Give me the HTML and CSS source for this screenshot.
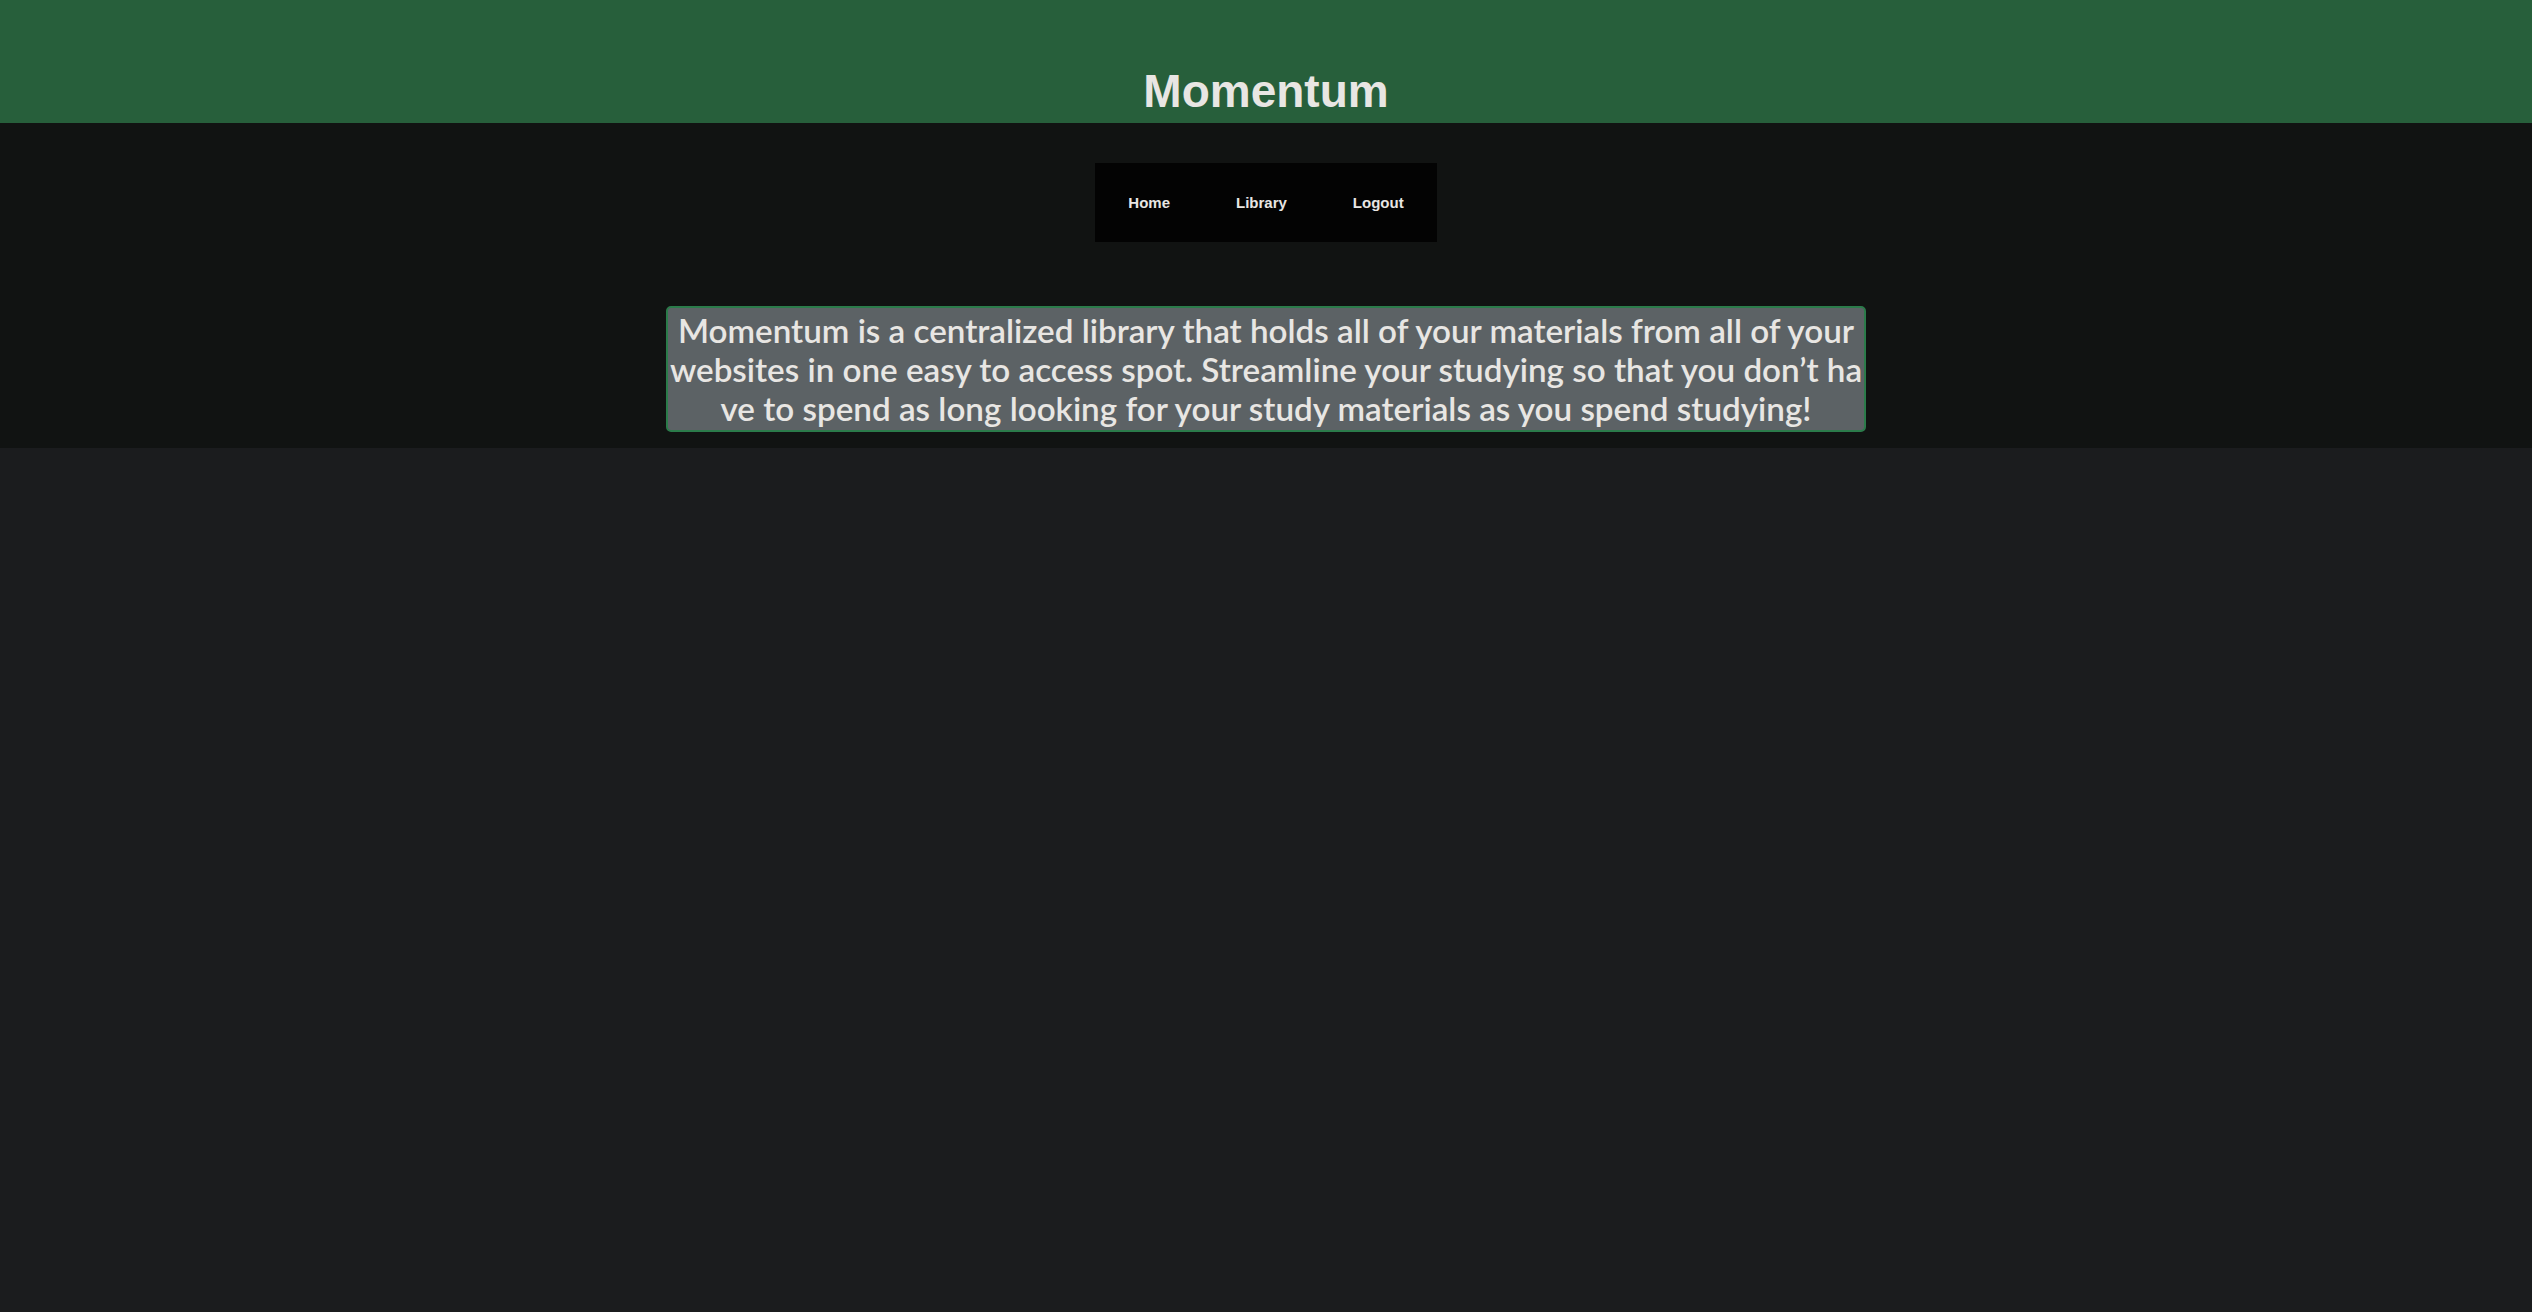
FILE: index.html
```html
<!DOCTYPE html>
<html lang="en">
<head>
<meta charset="utf-8">
<title>Momentum</title>
<link rel="stylesheet" href="styles.css">
</head>
<body>
  <header class="site-header">
    <h1 class="site-title">Momentum</h1>
  </header>
  <section class="hero">
    <nav class="main-nav">
      <a class="nav-link" href="#">Home</a>
      <a class="nav-link" href="#">Library</a>
      <a class="nav-link" href="#">Logout</a>
    </nav>
    <p class="intro">
      <span class="intro-line">Momentum is a centralized library that holds all of your materials from all of your</span>
      <span class="intro-line">websites in one easy to access spot. Streamline your studying so that you don’t ha</span>
      <span class="intro-line">ve to spend as long looking for your study materials as you spend studying!</span>
    </p>
  </section>
</body>
</html>
```
FILE: styles.css
```css
html, body {
  margin: 0;
  padding: 0;
}

body {
  background: #1b1c1e;
  color: #e8e6e3;
  font-family: "Liberation Sans", Arial, sans-serif;
  min-height: 100vh;
}

.site-header {
  background: #275f3b;
  height: 123px;
  box-sizing: border-box;
  padding-top: 65px;
  text-align: center;
}

.site-title {
  margin: 0;
  font-family: "Liberation Sans", Arial, sans-serif;
  font-weight: 700;
  font-size: 46px;
  line-height: 53px;
  color: #e8e6e3;
}

.hero {
  background: #111312;
  padding: 40px 0 16px;
  display: flex;
  flex-direction: column;
  align-items: center;
}

.main-nav {
  display: flex;
  align-items: center;
  height: 79px;
  background: #030303;
}

.nav-link {
  padding: 0 33px;
  font-family: "Liberation Sans", Arial, sans-serif;
  font-weight: 700;
  font-size: 15px;
  color: #e8e6e3;
  text-decoration: none;
}

.intro {
  margin: 64px 0 0;
  width: 1200px;
  box-sizing: border-box;
  padding: 2.5px 0;
  background: #5c6265;
  border: 2px solid #2b7b4a;
  border-radius: 5px;
  text-align: center;
  font-family: Lato, "Noto Sans", sans-serif;
  font-weight: 600;
  font-size: 33.2px;
  line-height: 39px;
  color: #e8e6e3;
}

.intro-line {
  display: block;
  white-space: nowrap;
}
```
